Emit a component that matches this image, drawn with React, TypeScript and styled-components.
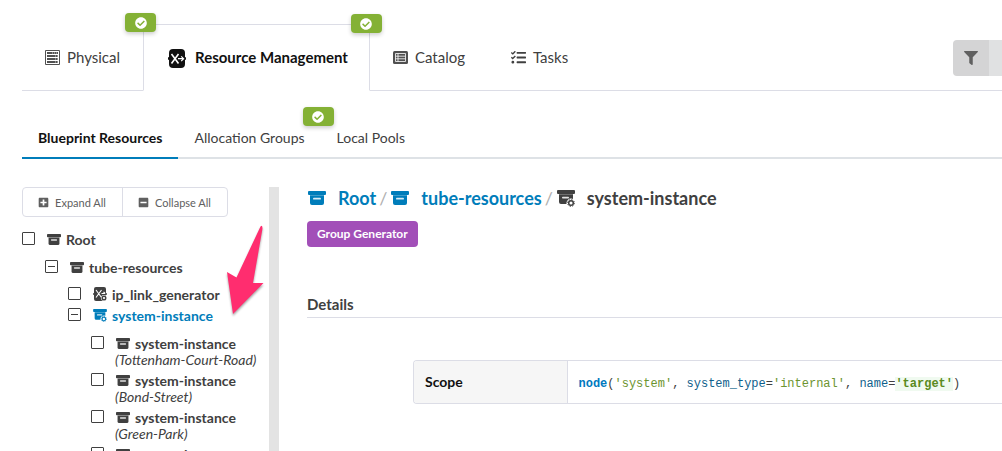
import React, { useEffect, useRef } from "react";
import styled, { createGlobalStyle, css } from "styled-components";
import { FaCheckCircle, FaFilter, FaMinusSquare, FaPlusSquare, FaTasks } from "react-icons/fa";

const ink = "#404040";
const blue = "#007dba";
const line = "#dcdde6";

const GlobalStyle = createGlobalStyle`
  * { box-sizing: border-box; }
  body {
    margin: 0;
    background: #fff;
    color: ${ink};
    font-family: Lato, "Open Sans", sans-serif;
    font-size: 14px;
  }
  button, input { font: inherit; color: inherit; }
  a { color: inherit; text-decoration: none; }
  ul { list-style: none; margin: 0; padding: 0; }
`;

const Page = styled.div`
  display: flex;
  flex-direction: column;
  height: 100vh;
  overflow: hidden;
  padding-left: 22px;
`;

const MainTabs = styled.nav`
  display: flex;
  height: 67px;
  margin-top: 24px;
  flex: none;
`;

const MainTab = styled.a<{ $active?: boolean }>`
  position: relative;
  display: flex;
  align-items: center;
  gap: 7px;
  padding: 0 23px;
  font-size: 15px;
  line-height: 20px;
  border-bottom: 1px solid ${line};
  ${(p) =>
    p.$active &&
    css`
      gap: 8px;
      padding: 0 21px 2px 23px;
      border: 1px solid ${line};
      border-bottom-color: transparent;
      color: #111;
      font-weight: 700;
    `}
`;

const TabActions = styled.div`
  display: flex;
  flex: 1;
  justify-content: flex-end;
  align-items: center;
  padding-top: 2px;
  border-bottom: 1px solid ${line};
`;

const ActionButton = styled.button<{ $pressed?: boolean }>`
  display: flex;
  align-items: center;
  justify-content: center;
  width: ${(p) => (p.$pressed ? "36px" : "13px")};
  height: 36px;
  padding: 0;
  border: 0;
  border-radius: ${(p) => (p.$pressed ? "4px 0 0 4px" : "0")};
  background: ${(p) => (p.$pressed ? "#d4d4d5" : "#e0e1e2")};
  color: #606060;
`;

const StatusBadge = styled.span`
  position: absolute;
  top: -11px;
  right: -13px;
  z-index: 1;
  display: flex;
  align-items: center;
  justify-content: center;
  width: 31px;
  height: 19px;
  border-radius: 4px;
  background: #84b135;
  color: #fff;
  box-shadow: 0 2px 4px rgba(0, 0, 0, 0.2);
`;

const SubTabs = styled.nav`
  display: flex;
  flex: none;
  margin-top: 27px;
  border-bottom: 2px solid #dee2e6;
`;

const SubTab = styled.a<{ $active?: boolean }>`
  position: relative;
  padding: 9px 16px;
  margin-bottom: -2px;
  line-height: 21px;
  border-bottom: 2px solid ${(p) => (p.$active ? blue : "transparent")};
  color: ${(p) => (p.$active ? "#111" : ink)};
  font-weight: ${(p) => (p.$active ? 700 : 400)};
`;

const Columns = styled.div`
  display: flex;
  flex: 1;
  min-height: 0;
  margin-top: 28px;
`;

const TreePanel = styled.aside`
  position: relative;
  width: 257px;
  flex: none;
  overflow: hidden;
  border-right: 10px solid #e3e3e3;
`;

const ButtonGroup = styled.div`
  display: flex;
  width: 206px;
  height: 30px;
  margin-bottom: 12px;
  border: 1px solid ${line};
  border-radius: 4px;
`;

const GroupButton = styled.button`
  display: flex;
  flex: auto;
  align-items: center;
  justify-content: center;
  gap: 6px;
  padding: 0 1px 0 0;
  border: 0;
  background: none;
  color: #606060;
  font-size: 11px;
  & + & { border-left: 1px solid ${line}; }
`;

const Branch = styled.ul`
  margin: 8px 0 0 23px;
  & & { margin-top: 7px; }
  & & li + li { margin-top: 1px; }
`;

const Leaves = styled.ul`
  margin: 9px 0 0 23px;
  && li + li { margin-top: 3px; }
`;

const NodeRow = styled.label<{ $active?: boolean; $tight?: boolean }>`
  display: flex;
  align-items: center;
  height: ${(p) => (p.$tight ? "18px" : "20px")};
  color: ${(p) => (p.$active ? blue : ink)};
  font-weight: 700;
  white-space: nowrap;
  svg { margin: 0 5px 0 12px; }
`;

const NodeCaption = styled.div`
  padding-left: 24px;
  font-style: italic;
  line-height: 16px;
  white-space: nowrap;
`;

const CheckBox = styled.input`
  appearance: none;
  width: 13px;
  height: 13px;
  margin: 0 0 1px;
  border: 1px solid ${ink};
  border-radius: 1px;
  background: #fff;
  &:indeterminate {
    background: linear-gradient(${ink}, ${ink}) center / 7px 1px no-repeat;
  }
`;

const Pointer = styled.svg`
  position: absolute;
  top: 34px;
  left: 198px;
  pointer-events: none;
  filter: drop-shadow(0 2px 1px rgba(0, 0, 0, 0.35));
`;

const Detail = styled.main`
  flex: 1;
  min-width: 0;
  padding-left: 28px;
`;

const Crumbs = styled.h1`
  display: flex;
  align-items: center;
  margin: 0;
  font-size: 18px;
  line-height: 22px;
  font-weight: 700;
`;

const Crumb = styled.a`
  display: flex;
  align-items: center;
  gap: 12px;
  padding-left: 1px;
  color: ${blue};
  &[aria-current] { color: ${ink}; }
`;

const Slash = styled.span`
  padding: 0 3px;
  color: #b0b0b0;
  font-weight: 400;
`;

const KindLabel = styled.span`
  display: inline-block;
  margin-top: 12px;
  padding: 0 10px;
  border-radius: 4px;
  background: #a24fb8;
  color: #fff;
  font-size: 12px;
  font-weight: 700;
  line-height: 26px;
`;

const SectionTitle = styled.h2`
  margin: 47px 0 42px;
  padding-bottom: 3px;
  border-bottom: 1px solid ${line};
  font-size: 15px;
  line-height: 20px;
`;

const Properties = styled.div`
  margin-left: 106px;
  border: 1px solid ${line};
  border-right: 0;
  border-radius: 4px 0 0 4px;
  overflow: hidden;
`;

const PropertyTable = styled.table`
  width: 100%;
  border-collapse: collapse;
  th {
    width: 153px;
    padding: 11px;
    border-right: 1px solid ${line};
    background: #f6f6f6;
    color: #111;
    text-align: left;
    line-height: 20px;
  }
  td { padding: 11px; }
`;

const Code = styled.code`
  font-family: "Liberation Mono", monospace;
  font-size: 12px;
  white-space: nowrap;
`;

const Fn = styled.b` color: #0079bf; `;
const Arg = styled.span` color: #0f5f8c; `;
const Str = styled.span` color: #6c9430; `;
const Match = styled.b`
  background: #f0faf0;
  color: #5a8a20;
`;

const ArchiveIcon = ({ size = 14 }: { size?: number }) => (
  <svg width={size} height={Math.round((size * 14) / 18)} viewBox="0 0 18 14" fill="currentColor">
    <path d="M1 0h16q1 0 1 1v2q0 1-1 1H1Q0 4 0 3V1q0-1 1-1z" />
    <path d="M2 4.300h14V12q0 2-2 2H4q-2 0-2-2z" />
    <rect x="5" y="6.800" width="8" height="1.800" rx=".9" fill="#fff" opacity=".85" />
  </svg>
);

const GeneratorIcon = ({ size = 14 }: { size?: number }) => (
  <svg width={size} height={Math.round((size * 17) / 18)} viewBox="0 0 18 17" fill="currentColor">
    <path d="M1 0h16q1 0 1 1v2q0 1-1 1H1Q0 4 0 3V1q0-1 1-1z" />
    <path d="M2 4.300h14v4.600a4.800 4.800 0 0 0-6.500 5.100H4q-2 0-2-2z" />
    <rect x="5" y="6.800" width="7" height="1.700" rx=".8" fill="#fff" opacity=".85" />
    <circle cx="14" cy="13" r="2.300" fill="none" stroke="currentColor" strokeWidth="1.500" />
    <circle cx="14" cy="13" r="3.400" fill="none" stroke="currentColor" strokeWidth="1" strokeDasharray="1.330 1.330" />
  </svg>
);

const LinkGeneratorIcon = () => (
  <svg width="14" height="14" viewBox="0 0 14 14">
    <rect x="1" y="0" width="12" height="14" rx="2" fill="currentColor" />
    <path d="M0 7h2M12 7h2" stroke="currentColor" strokeWidth="1.500" />
    <path d="M3 3l5.500 7.500M8.500 3L3 10.500M8.500 6.500h3.500M10.500 4.800l1.700 1.700" stroke="#fff" strokeWidth="1.100" fill="none" />
    <circle cx="11" cy="11" r="3" fill="#fff" />
    <circle cx="11" cy="11" r="1.800" fill="#fff" stroke="currentColor" strokeWidth="1.400" />
  </svg>
);

const ResourceIcon = () => (
  <svg width="20" height="22" viewBox="0 -3 20 22">
    <rect x="2" y="0" width="16" height="19" rx="4" fill="#111" />
    <path d="M1 9.500h2M17 9.500h2" stroke="#111" strokeWidth="2.500" />
    <path d="M4.500 5l7 9.500M11.500 5l-7 9.500" stroke="#fff" strokeWidth="1.600" fill="none" />
    <path d="M11 9.700h5.500M14.200 7.300l2.400 2.400-2.400 2.400" stroke="#fff" strokeWidth="1.200" fill="none" />
  </svg>
);

const RackIcon = () => (
  <svg width="15" height="15" viewBox="0 0 15 15">
    <path d="M.5.500h14v14H.5z" fill="#fff" stroke="#505050" />
    <path d="M2 3h11M2 6h11M2 9h11M2 12h11" stroke="#505050" strokeWidth="2" />
    <path d="M7 3h1M9 3h1M11 3h1M10 6h1M12 6h1M10 9h1M12 9h1M10 12h1M12 12h1" stroke="#ccc" />
  </svg>
);

const CatalogIcon = () => (
  <svg width="15" height="13" viewBox="0 0 15 13">
    <rect width="15" height="13" rx="1.500" fill="#505050" />
    <path
      d="M2.500 2.500h10v8h-10zM2.500 5.200h10M2.500 7.800h10M5 2.500v8"
      fill="none"
      stroke="#fff"
      strokeWidth=".8"
    />
  </svg>
);

function TreeCheck({ mixed }: { mixed?: boolean }) {
  const ref = useRef<HTMLInputElement>(null);
  useEffect(() => {
    if (ref.current) ref.current.indeterminate = !!mixed;
  }, [mixed]);
  return <CheckBox ref={ref} type="checkbox" />;
}

const Badge = () => (
  <StatusBadge>
    <FaCheckCircle size={12} />
  </StatusBadge>
);

const instances = ["Tottenham-Court-Road", "Bond-Street", "Green-Park", ""];

export default function App() {
  return (
    <Page>
      <GlobalStyle />
      <MainTabs>
        <MainTab href="#physical">
          <RackIcon />
          Physical
          <Badge />
        </MainTab>
        <MainTab href="#resources" $active>
          <ResourceIcon />
          Resource Management
          <Badge />
        </MainTab>
        <MainTab href="#catalog">
          <CatalogIcon />
          Catalog
        </MainTab>
        <MainTab href="#tasks">
          <FaTasks size={15} />
          Tasks
        </MainTab>
        <TabActions>
          <ActionButton $pressed aria-label="Filter">
            <FaFilter size={14} />
          </ActionButton>
          <ActionButton aria-label="More" />
        </TabActions>
      </MainTabs>

      <SubTabs>
        <SubTab href="#blueprint" $active>Blueprint Resources</SubTab>
        <SubTab href="#groups">
          Allocation Groups
          <Badge />
        </SubTab>
        <SubTab href="#pools">Local Pools</SubTab>
      </SubTabs>

      <Columns>
        <TreePanel>
          <ButtonGroup>
            <GroupButton><FaPlusSquare size={11} />Expand All</GroupButton>
            <GroupButton><FaMinusSquare size={11} />Collapse All</GroupButton>
          </ButtonGroup>
          <ul>
            <li>
              <NodeRow><TreeCheck /><ArchiveIcon />Root</NodeRow>
              <Branch>
                <li>
                  <NodeRow><TreeCheck mixed /><ArchiveIcon />tube-resources</NodeRow>
                  <Branch>
                    <li>
                      <NodeRow><TreeCheck /><LinkGeneratorIcon />ip_link_generator</NodeRow>
                    </li>
                    <li>
                      <NodeRow $active><TreeCheck mixed /><GeneratorIcon />system-instance</NodeRow>
                      <Leaves>
                        {instances.map((name) => (
                          <li key={name}>
                            <NodeRow $tight><TreeCheck /><ArchiveIcon />system-instance</NodeRow>
                            {name && <NodeCaption>({name})</NodeCaption>}
                          </li>
                        ))}
                      </Leaves>
                    </li>
                  </Branch>
                </li>
              </Branch>
            </li>
          </ul>
          <Pointer width="48" height="100" viewBox="0 0 48 100">
            <path d="M40.500 5.500q2-2 2 2L33 62h10.500L13 93 7 51l9.500 5.500z" fill="#ff2d6f" />
          </Pointer>
        </TreePanel>

        <Detail>
          <Crumbs>
            <Crumb href="#root"><ArchiveIcon size={18} />Root</Crumb>
            <Slash>/</Slash>
            <Crumb href="#tube"><ArchiveIcon size={18} />tube-resources</Crumb>
            <Slash>/</Slash>
            <Crumb href="#instance" aria-current="page"><GeneratorIcon size={18} />system-instance</Crumb>
          </Crumbs>
          <KindLabel>Group Generator</KindLabel>
          <SectionTitle>Details</SectionTitle>
          <Properties>
            <PropertyTable>
              <tbody>
                <tr>
                  <th scope="row">Scope</th>
                  <td>
                    <Code>
                      <Fn>node</Fn>(<Str>'system'</Str>, <Arg>system_type</Arg>=<Str>'internal'</Str>, <Arg>name</Arg>=<Match>'target'</Match>)
                    </Code>
                  </td>
                </tr>
              </tbody>
            </PropertyTable>
          </Properties>
        </Detail>
      </Columns>
    </Page>
  );
}
